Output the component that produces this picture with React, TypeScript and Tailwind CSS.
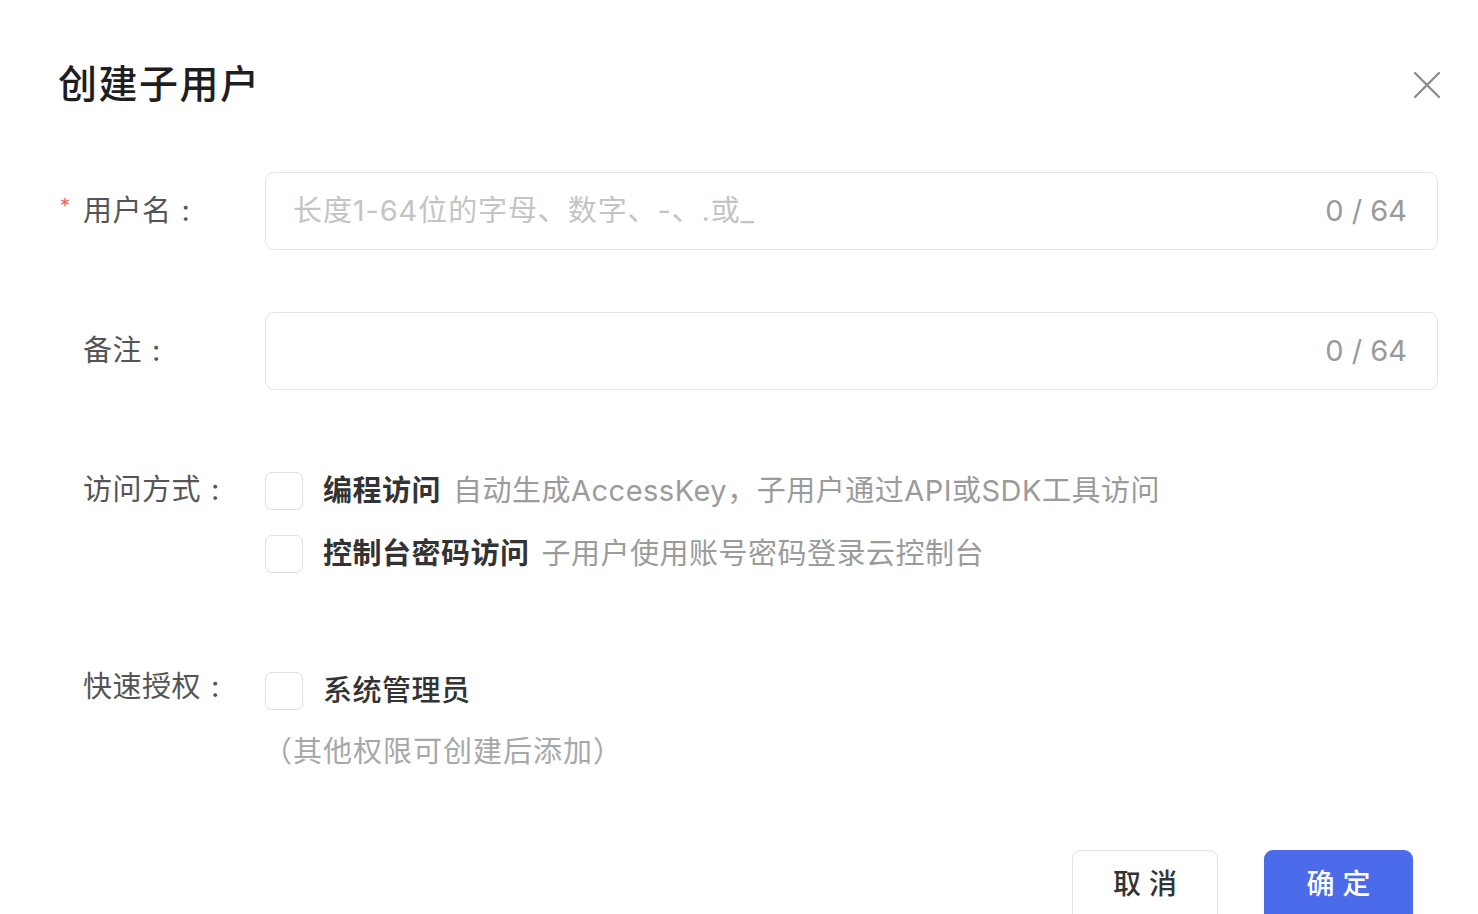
import React from 'react';

const font = { fontFamily: 'Inter, "Noto Sans CJK SC", "Noto Sans", sans-serif' };

const Checkbox = () => (
  <span className="block w-[38px] h-[38px] shrink-0 rounded-[7px] border-[1.5px] border-[#dedede] bg-white" />
);

const Counter = () => (
  <span className="text-[29px] text-[#9a9a9a]">0 / 64</span>
);

const Label = ({ text, required }: { text: string; required?: boolean }) => (
  <div className="w-[207px] shrink-0 flex items-center">
    <span className="w-[25px] text-[20px] text-[#f25c5c] -mt-[10px] pl-[2px]">{required ? '*' : ''}</span>
    <span className="text-[29px] text-[#555] tracking-[0.5px]">
      {text}
      <span className="ml-[10px]">:</span>
    </span>
  </div>
);

export default function App() {
  return (
    <div className="w-[1478px] h-[914px] bg-white overflow-hidden pl-[58px] pr-[40px]" style={font}>
      {/* header */}
      <div className="flex items-center justify-between pt-[62px] h-[106px]">
        <h1 className="text-[39px] leading-[44px] font-medium text-[#1e1e22] tracking-[1.5px]">创建子用户</h1>
        <svg width="28" height="28" viewBox="0 0 28 28" className="mr-[-3px] mt-[2px]">
          <path d="M2 2 L26 26 M26 2 L2 26" stroke="#8a8a8a" strokeWidth="2.2" strokeLinecap="round" />
        </svg>
      </div>

      {/* username */}
      <div className="flex items-center mt-[66px]">
        <Label text="用户名" required />
        <div className="flex-1 h-[78px] rounded-[9px] border-[1.5px] border-[#e4e4e4] flex items-center justify-between pl-[27px] pr-[30px]">
          <span className="text-[29px] text-[#c4c4c4] tracking-[0.9px]">长度1-64位的字母、数字、-、.或_</span>
          <Counter />
        </div>
      </div>

      {/* remark */}
      <div className="flex items-center mt-[62px]">
        <Label text="备注" />
        <div className="flex-1 h-[78px] rounded-[9px] border-[1.5px] border-[#e4e4e4] flex items-center justify-end pr-[30px]">
          <Counter />
        </div>
      </div>

      {/* access mode */}
      <div className="flex mt-[82px]">
        <div className="h-[36px] flex items-center">
          <Label text="访问方式" />
        </div>
        <div className="flex flex-col gap-[25px]">
          <div className="flex items-center gap-[20px] h-[38px]">
            <Checkbox />
            <span className="text-[29px] tracking-[0.5px]">
              <span className="font-semibold text-[#333]">编程访问</span>
              <span className="text-[#9b9b9b] ml-[12px]">自动生成AccessKey，子用户通过API或SDK工具访问</span>
            </span>
          </div>
          <div className="flex items-center gap-[20px] h-[38px]">
            <Checkbox />
            <span className="text-[29px] tracking-[0.5px]">
              <span className="font-semibold text-[#333]">控制台密码访问</span>
              <span className="text-[#9b9b9b] ml-[12px]">子用户使用账号密码登录云控制台</span>
            </span>
          </div>
        </div>
      </div>

      {/* quick auth */}
      <div className="flex mt-[99px]">
        <div className="h-[30px] flex items-center">
          <Label text="快速授权" />
        </div>
        <div className="flex flex-col">
          <div className="flex items-center gap-[20px] h-[38px]">
            <Checkbox />
            <span className="text-[29px] font-medium text-[#333] tracking-[0.5px]">系统管理员</span>
          </div>
          <span className="mt-[22px] text-[29px] leading-[40px] text-[#a8a8a8] -ml-[2px] tracking-[1px]">（其他权限可创建后添加）</span>
        </div>
      </div>

      {/* footer */}
      <div className="flex justify-end gap-[46px] mt-[78px] pr-[25px]">
        <button className="w-[146px] h-[74px] rounded-[9px] border-[1.5px] border-[#e2e2e2] bg-white text-[28px] font-medium text-[#333] tracking-[8px] pl-[8px] pb-[6px]">
          取消
        </button>
        <button className="w-[149px] h-[74px] rounded-[9px] bg-[#4b6bea] text-[28px] font-medium text-white tracking-[8px] pl-[8px] pb-[6px]">
          确定
        </button>
      </div>
    </div>
  );
}
